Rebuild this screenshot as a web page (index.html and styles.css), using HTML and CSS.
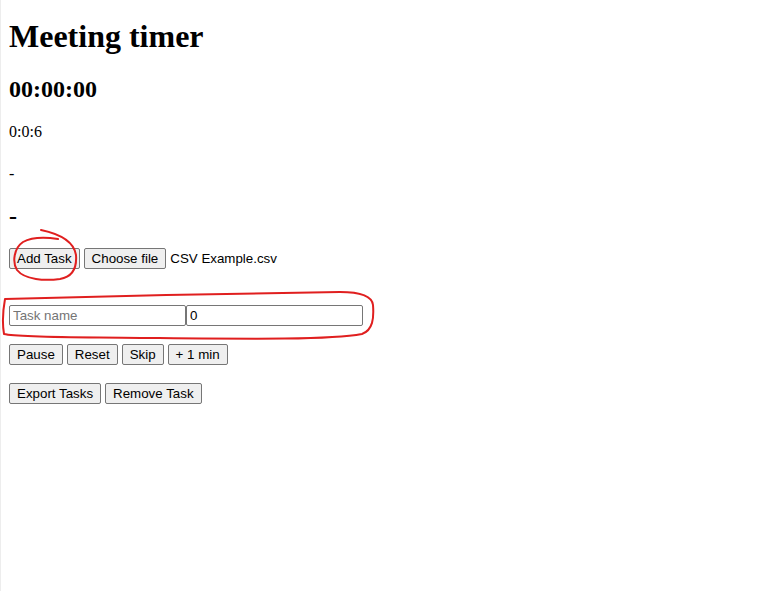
FILE: index.html
```html
<!DOCTYPE html>
<html lang="en">
<head>
<meta charset="utf-8">
<title>Meeting timer</title>
<link rel="stylesheet" href="styles.css">
</head>
<body>
<h1 class="title">Meeting timer</h1>
<h2 class="clock">00:00:00</h2>
<p class="elapsed">0:0:6</p>
<p class="current">-</p>
<h2 class="next">-</h2>
<div class="row controls">
  <button class="btn">Add Task</button>
  <label class="file">
    <span class="btn">Choose file</span>
    <span class="file-name">CSV Example.csv</span>
  </label>
</div>
<div class="row fields">
  <input class="field" type="text" placeholder="Task name"><input class="field" type="text" value="0">
</div>
<div class="row actions">
  <button class="btn">Pause</button>
  <button class="btn">Reset</button>
  <button class="btn">Skip</button>
  <button class="btn">+ 1 min</button>
</div>
<div class="row actions">
  <button class="btn">Export Tasks</button>
  <button class="btn">Remove Task</button>
</div>

<svg class="marks" width="759" height="591" viewBox="0 0 759 591" aria-hidden="true">
  <path d="M41,230 C60,234 74,242 76,255 C77,268 72,277 60,279 C45,281 25,280 17,270 C12,262 14,248 23,242 C32,237 45,237 58,239" />
  <path d="M5,299 C100,296 250,293 340,292 C360,292 372,296 373,305 C374,318 373,330 362,334 C330,340 250,339 150,338 C90,337 20,338 4,334 C2,322 3,310 5,299" />
</svg>
</body>
</html>
```

FILE: styles.css
```css
html {
  min-height: 100vh;
  box-sizing: border-box;
  border-left: 1px solid #ededed;
  background: #fff;
}

body {
  margin: 8px;
  font-family: "Liberation Serif", "Times New Roman", serif;
  font-size: 16px;
  color: #000;
}

h1 {
  font-size: 32px;
  margin: 9.5px 0 21.44px;
}

h2 {
  font-size: 24px;
  margin: 19.92px 0;
}

p {
  margin: 16px 0;
}

.current {
  margin-top: 24px;
}

.next {
  margin-bottom: 0;
}

.row {
  display: flex;
  align-items: center;
  gap: 4px;
}

.controls {
  margin-top: 18px;
}

.fields {
  margin-top: 36px;
  gap: 0;
}

.actions {
  margin-top: 18px;
}

.btn {
  box-sizing: border-box;
  height: 21px;
  padding: 2px 7px;
  border: 1px solid #767676;
  border-radius: 2px;
  background: #efefef;
  font-family: "Liberation Sans", Arial, sans-serif;
  font-size: 13.333px;
  line-height: 15px;
  color: #000;
  margin: 0;
  display: inline-block;
}

.file {
  display: flex;
  align-items: center;
  gap: 4px;
  font-family: "Liberation Sans", Arial, sans-serif;
  font-size: 13.333px;
}

.file-name {
  color: #000;
}

.field {
  box-sizing: border-box;
  width: 177px;
  height: 21px;
  margin: 0;
  padding: 1px 3px;
  border: 1px solid #767676;
  border-radius: 2px;
  font-family: "Liberation Sans", Arial, sans-serif;
  font-size: 13.333px;
  color: #000;
  background: #fff;
}

.field::placeholder {
  color: #757575;
}

.marks {
  position: absolute;
  left: 0;
  top: 0;
  pointer-events: none;
  fill: none;
  stroke: #e01f1f;
  stroke-width: 2;
  stroke-linecap: round;
  stroke-linejoin: round;
}
```
